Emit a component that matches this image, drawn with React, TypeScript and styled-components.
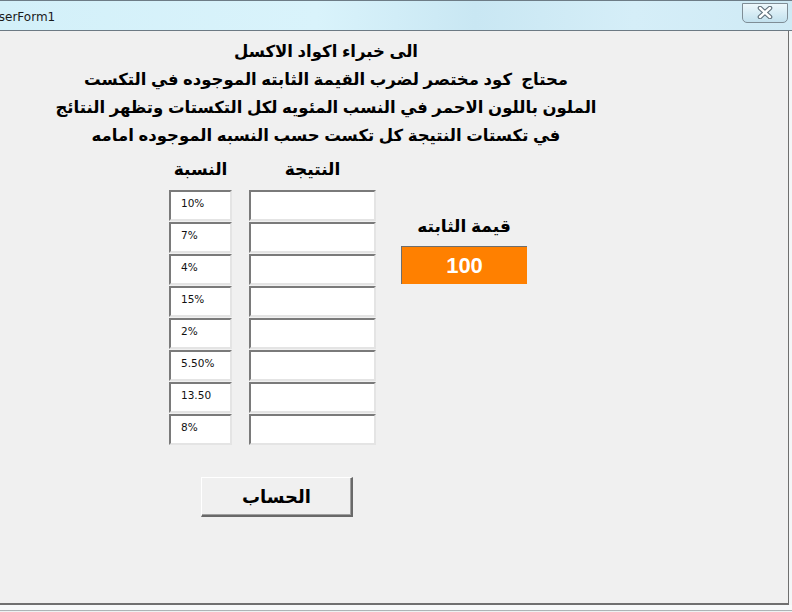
import styled, { createGlobalStyle } from "styled-components";

const GlobalStyle = createGlobalStyle`
    html, body {
        margin: 0;
        padding: 0;
        background: #ffffff;
        overflow: hidden;
    }
`;

const arabicFont = `"Liberation Sans", "DejaVu Sans", sans-serif`;

const Window = styled.div`
    width: 792px;
    height: 612px;
    display: flex;
    flex-direction: column;
    background: #f4f6f7;
    font-family: ${arabicFont};
    overflow: hidden;
`;

const TitleBar = styled.div`
    height: 29px;
    flex: none;
    display: flex;
    align-items: center;
    justify-content: space-between;
    border-top: 1px solid #6d7c86;
    border-bottom: 1px solid #6c7a84;
    background: linear-gradient(
        90deg,
        #d3f0f9 0%,
        #d9f3fb 40%,
        #c9e7f3 60%,
        #d5eef8 80%,
        #cfeaf5 100%
    );
`;

const TitleText = styled.span`
    margin-left: -10px;
    margin-top: 2px;
    font-family: "DejaVu Sans", sans-serif;
    font-size: 12px;
    color: #1a1a1a;
`;

const CloseButton = styled.div`
    width: 44px;
    height: 18px;
    margin-right: 4px;
    margin-bottom: 6px;
    border: 1px solid #7f8d96;
    border-radius: 0 0 5px 5px;
    background: linear-gradient(180deg, #eef8fc 0%, #d7ecf5 50%, #c3e1ee 100%);
    display: flex;
    align-items: center;
    justify-content: center;
`;

const Client = styled.div`
    width: 788px;
    height: 572px;
    flex: none;
    background: #f0f0f0;
    border-right: 1px solid #6f6f6f;
    border-bottom: 2px solid #707070;
    display: flex;
    flex-direction: column;
`;

const Heading = styled.div`
    width: 652px;
    padding-top: 6px;
    height: 113px;
    text-align: center;
    direction: rtl;
    font-size: 16.5px;
    font-weight: bold;
    line-height: 28px;
    color: #000;
    white-space: pre;
`;

const Body = styled.div`
    display: flex;
    margin-top: -2px;
    margin-left: 169px;
`;

const Column = styled.div<{ $width: number; $gap?: number }>`
    width: ${(p) => p.$width}px;
    margin-left: ${(p) => p.$gap ?? 0}px;
    display: flex;
    flex-direction: column;
    gap: 1px;
`;

const ColumnHeader = styled.div`
    height: 41px;
    box-sizing: border-box;
    padding-top: 8px;
    line-height: 28px;
    text-align: center;
    direction: rtl;
    font-size: 17px;
    font-weight: bold;
    color: #000;
`;

const TextBox = styled.div`
    height: 31px;
    box-sizing: border-box;
    background: #ffffff;
    border-top: 2px solid #7a7a7a;
    border-left: 2px solid #7a7a7a;
    border-right: 2px solid #e4e4e4;
    border-bottom: 2px solid #e4e4e4;
    padding: 5px 0 0 10px;
    font-family: "DejaVu Sans", sans-serif;
    font-size: 10.5px;
    color: #111;
`;

const ConstPanel = styled.div`
    margin-left: 25px;
    padding-top: 66px;
    width: 126px;
    display: flex;
    flex-direction: column;
    align-items: center;
    gap: 7px;
`;

const ConstLabel = styled.div`
    height: 25px;
    line-height: 25px;
    direction: rtl;
    font-size: 17px;
    font-weight: bold;
    color: #000;
`;

const ConstBox = styled.div`
    width: 126px;
    height: 38px;
    box-sizing: border-box;
    background: #ff8000;
    border-top: 1px solid #6e6e6e;
    border-left: 1px solid #6e6e6e;
    display: flex;
    align-items: center;
    justify-content: center;
    font-size: 22px;
    font-weight: bold;
    color: #ffffff;
`;

const CalcButton = styled.button`
    width: 152px;
    height: 40px;
    margin: 32px 0 0 201px;
    box-sizing: border-box;
    background: #f0f0f0;
    border-top: 1px solid #ffffff;
    border-left: 1px solid #ffffff;
    border-right: 2px solid #696969;
    border-bottom: 2px solid #696969;
    box-shadow: inset -1px -1px 0 #a0a0a0;
    font-family: ${arabicFont};
    font-size: 18px;
    font-weight: bold;
    color: #000;
    direction: rtl;
    padding: 0;
`;

const BottomStrip = styled.div`
    flex: 1;
    background: linear-gradient(180deg, #f7f9fa 0%, #f7f9fa 70%, #9aa0a4 75%, #eef1f2 90%);
`;

const rates = ["10%", "7%", "4%", "15%", "2%", "5.50%", "13.50", "8%"];

const headingLines = [
    "الى خبراء اكواد الاكسل",
    "محتاج  كود مختصر لضرب القيمة الثابته الموجوده في التكست",
    "الملون باللون الاحمر في النسب المئويه لكل التكستات وتظهر النتائج",
    "في تكستات النتيجة كل تكست حسب النسبه الموجوده امامه",
];

export default function App() {
    return (
        <Window>
            <GlobalStyle />
            <TitleBar>
                <TitleText>UserForm1</TitleText>
                <CloseButton>
                    <svg width="18" height="13" viewBox="0 0 18 13">
                        <path
                            d="M4 2 L14 11 M14 2 L4 11"
                            stroke="#5f6f7a"
                            strokeWidth="4.6"
                            strokeLinecap="round"
                        />
                        <path
                            d="M4 2 L14 11 M14 2 L4 11"
                            stroke="#ffffff"
                            strokeWidth="2.4"
                            strokeLinecap="round"
                        />
                    </svg>
                </CloseButton>
            </TitleBar>
            <Client>
                <Heading>
                    {headingLines.map((line) => (
                        <div key={line}>{line}</div>
                    ))}
                </Heading>
                <Body>
                    <Column $width={63}>
                        <ColumnHeader>النسبة</ColumnHeader>
                        {rates.map((r) => (
                            <TextBox key={r}>{r}</TextBox>
                        ))}
                    </Column>
                    <Column $width={127} $gap={17}>
                        <ColumnHeader>النتيجة</ColumnHeader>
                        {rates.map((r) => (
                            <TextBox key={r} />
                        ))}
                    </Column>
                    <ConstPanel>
                        <ConstLabel>قيمة الثابته</ConstLabel>
                        <ConstBox>100</ConstBox>
                    </ConstPanel>
                </Body>
                <CalcButton>الحساب</CalcButton>
            </Client>
            <BottomStrip />
        </Window>
    );
}
